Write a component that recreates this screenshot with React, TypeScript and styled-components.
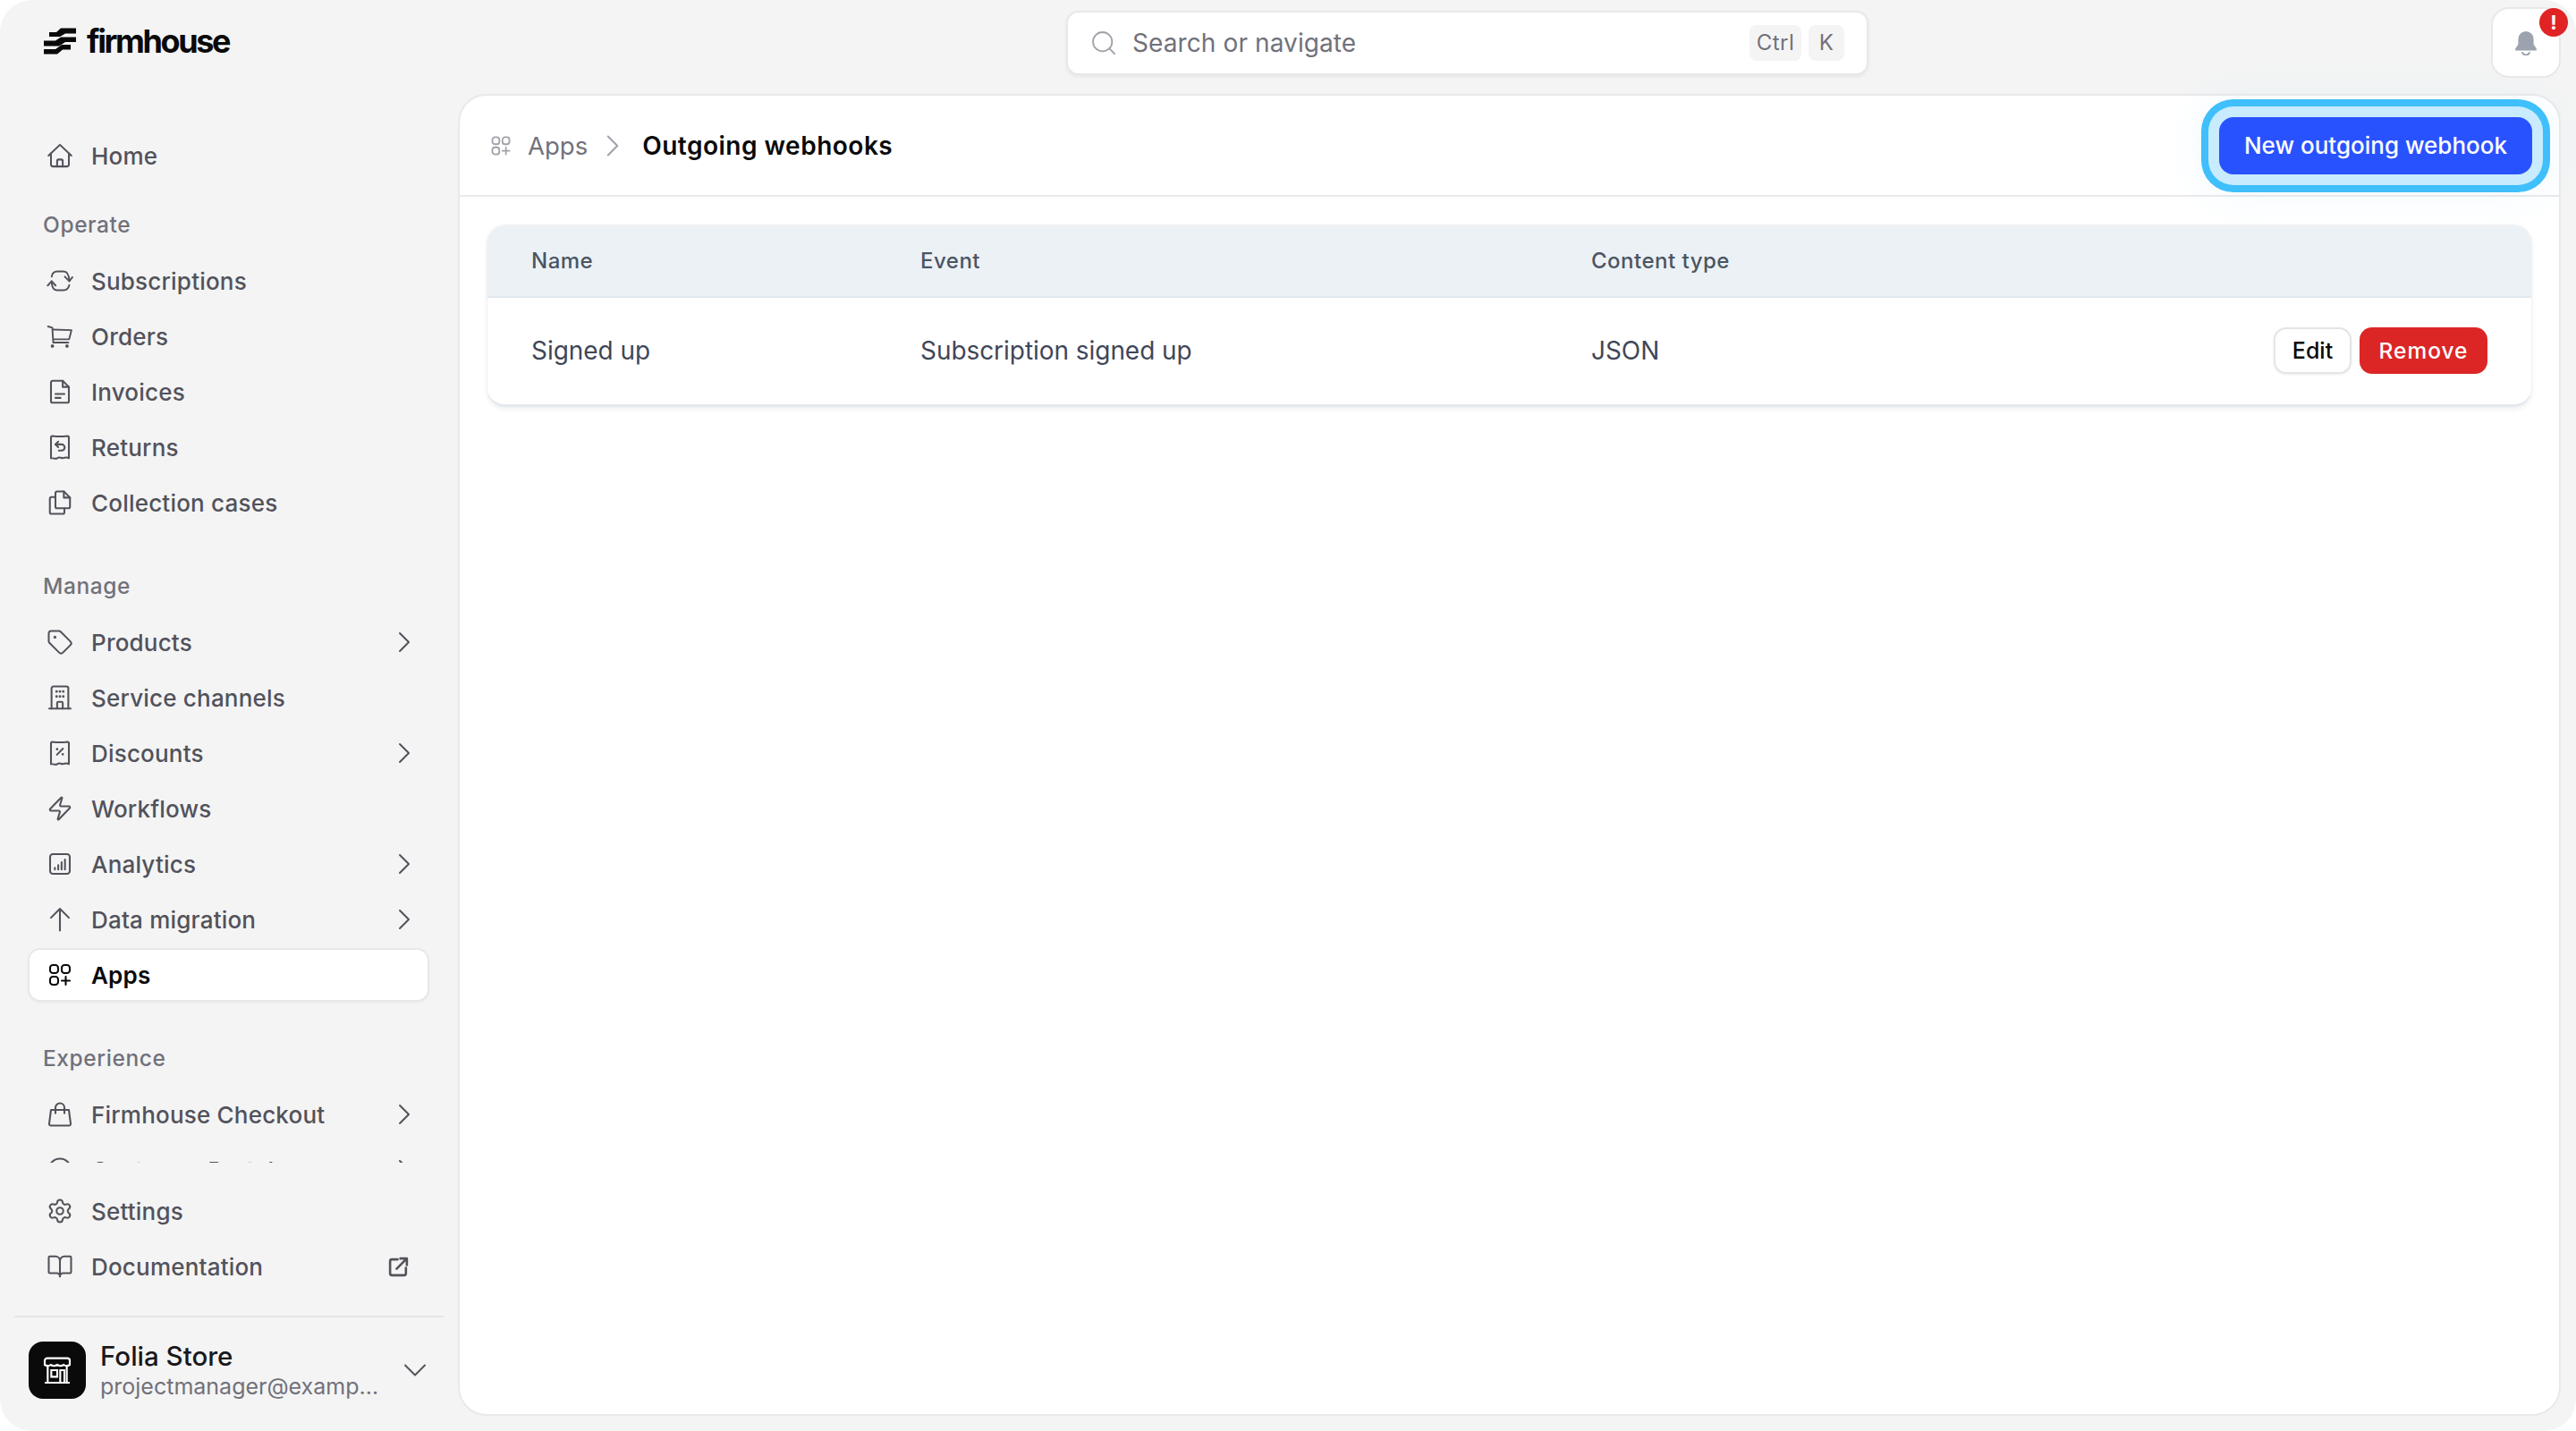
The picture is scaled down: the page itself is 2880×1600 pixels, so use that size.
import React from "react";
import styled, { createGlobalStyle } from "styled-components";
import { BookOpen, ChevronDown, ChevronRight, Search, Settings, Tag, Zap } from "lucide-react";

const GlobalStyle = createGlobalStyle`
  html, body {
    margin: 0;
    padding: 0;
    background: #fff;
  }
  * {
    box-sizing: border-box;
  }
  body {
    font-family: Inter, "Liberation Sans", sans-serif;
  }
`;

const Shell = styled.div`
  display: grid;
  grid-template-columns: 512px 1fr;
  width: 2880px;
  height: 1600px;
  background: #f4f4f4;
  border-radius: 36px;
  overflow: hidden;
`;

const Sidebar = styled.aside`
  display: flex;
  flex-direction: column;
  height: 1600px;
`;

const Brand = styled.div`
  display: flex;
  align-items: center;
  gap: 12px;
  height: 146px;
  padding: 0 0 54px 49px;
  flex-shrink: 0;
`;

const Wordmark = styled.span`
  font-size: 36px;
  font-weight: 700;
  letter-spacing: -2.4px;
  line-height: 1;
  color: #0a0a0a;
`;

const ScrollArea = styled.div`
  flex: 1;
  min-height: 0;
  overflow: hidden;
  padding: 0 34px 0 33px;
`;

const Group = styled.div<{ $top?: number }>`
  display: flex;
  flex-direction: column;
  gap: 6px;
  margin-top: ${(p) => p.$top || 0}px;
`;

const GroupTitle = styled.div`
  height: 40px;
  line-height: 43px;
  margin-bottom: 10px;
  padding-left: 15px;
  font-size: 24.5px;
  font-weight: 500;
  letter-spacing: 0.6px;
  color: #71717a;
`;

const NavItem = styled.div<{ $active?: boolean }>`
  display: flex;
  align-items: center;
  gap: 20px;
  flex-shrink: 0;
  height: 56px;
  padding: 0 20px 0 19px;
  border-radius: 12px;
  font-size: 26px;
  font-weight: ${(p) => (p.$active ? 600 : 450)};
  letter-spacing: 0.2px;
  color: ${(p) => (p.$active ? "#0a0a0a" : "#52525b")};
  background: ${(p) => (p.$active ? "#fff" : "transparent")};
  box-shadow: ${(p) =>
    p.$active ? "0 0 0 2px #e8e8e8, 0 2px 4px rgba(0,0,0,0.08)" : "none"};
  svg {
    flex-shrink: 0;
  }
`;

const NavLabel = styled.span`
  flex: 1;
  white-space: nowrap;
`;

const MoreChevron = styled(ChevronRight)`
  margin-right: -14px;
  color: #52525b;
`;

const BottomNav = styled.div`
  display: flex;
  flex-direction: column;
  gap: 6px;
  padding: 26px 34px 27px 33px;
`;

const Account = styled.div`
  display: flex;
  align-items: center;
  height: 129px;
  margin: 0 16px;
  padding: 0 10px 9px 16px;
  border-top: 2px solid #e5e5e5;
`;

const StoreBadge = styled.div`
  display: flex;
  align-items: center;
  justify-content: center;
  width: 64px;
  height: 64px;
  border-radius: 16px;
  background: #0a0a0a;
  flex-shrink: 0;
`;

const AccountText = styled.div`
  display: flex;
  flex-direction: column;
  flex: 1;
  min-width: 0;
  margin-left: 16px;
`;

const AccountName = styled.div`
  font-size: 29.5px;
  font-weight: 500;
  line-height: 36px;
  color: #18181b;
`;

const AccountMail = styled.div`
  width: 316px;
  font-size: 25px;
  line-height: 32px;
  color: #71717a;
  white-space: nowrap;
  overflow: hidden;
  text-overflow: ellipsis;
`;

const Main = styled.main`
  display: flex;
  flex-direction: column;
  min-width: 0;
  height: 1600px;
`;

const TopBar = styled.div`
  display: flex;
  align-items: center;
  height: 105px;
  padding: 0 17px 10px 0;
  flex-shrink: 0;
`;

const SearchBox = styled.div`
  display: flex;
  align-items: center;
  gap: 16px;
  width: 897px;
  height: 72px;
  margin-left: 680px;
  padding: 0 25px 0 24px;
  background: #fff;
  border: 2px solid #e8e8e8;
  border-radius: 14px;
  box-shadow: 0 2px 4px rgba(0, 0, 0, 0.06);
`;

const SearchHint = styled.span`
  flex: 1;
  font-size: 28px;
  letter-spacing: 0.1px;
  color: #71717a;
`;

const Keys = styled.div`
  display: flex;
  gap: 8px;
`;

const Kbd = styled.kbd<{ $width: number }>`
  display: flex;
  align-items: center;
  justify-content: center;
  width: ${(p) => p.$width}px;
  height: 40px;
  border-radius: 8px;
  background: #f4f4f5;
  font-family: Inter, "Liberation Sans", sans-serif;
  font-size: 24px;
  letter-spacing: 0.5px;
  color: #71717a;
`;

const BellButton = styled.div`
  position: relative;
  display: flex;
  align-items: center;
  justify-content: center;
  width: 78px;
  height: 79px;
  margin-left: auto;
  background: #fff;
  border: 2px solid #e8e8e8;
  border-radius: 20px;
`;

const BellBadge = styled.span`
  position: absolute;
  top: -1px;
  right: -10px;
  display: flex;
  align-items: center;
  justify-content: center;
  width: 32px;
  height: 32px;
  border-radius: 50%;
  background: #e02424;
  color: #fff;
  font-size: 22px;
  font-weight: 700;
`;

const Panel = styled.section`
  flex: 1;
  display: flex;
  flex-direction: column;
  min-height: 0;
  margin: 0 17px 17px 0;
  background: #fff;
  border: 2px solid #e8e9eb;
  border-radius: 32px;
`;

const PanelHeader = styled.header`
  display: flex;
  align-items: center;
  height: 113px;
  padding: 0 30px 0 33px;
  border-bottom: 2px solid #e8e9eb;
  flex-shrink: 0;
`;

const CrumbIcon = styled.span`
  display: flex;
  color: #a1a1aa;
`;

const Crumb = styled.span`
  margin-left: 17px;
  font-size: 27.5px;
  color: #71717a;
`;

const CrumbSep = styled(ChevronRight)`
  margin: 0 12px 0 7px;
  color: #a1a1aa;
`;

const CrumbCurrent = styled.h1`
  margin: 0;
  font-size: 28px;
  font-weight: 600;
  letter-spacing: 0.5px;
  color: #0a0a0a;
`;

const PrimaryButton = styled.button`
  height: 64px;
  margin-left: auto;
  padding: 0 28px;
  border: 0;
  border-radius: 16px;
  background: #2952ff;
  color: #fff;
  font-family: inherit;
  font-size: 26px;
  font-weight: 500;
  box-shadow: 0 0 0 12px #c8ebfd, 0 0 0 20px #3fbffb, 0 0 40px 26px rgba(200, 235, 253, 0.18);
`;

const Content = styled.div`
  padding: 32px 31px;
`;

const Card = styled.div`
  border-radius: 20px;
  overflow: hidden;
  background: #fff;
  border-bottom: 3px solid #e4e9f0;
  box-shadow: 0 0 0 1px #f1f2f4, 0 2px 6px rgba(0, 0, 0, 0.08);
`;

const Row = styled.div`
  display: grid;
  grid-template-columns: 435px 750px 1fr auto;
  align-items: center;
  padding: 0 49px;
`;

const HeadRow = styled(Row)`
  height: 81px;
  background: #ecf1f5;
  border-bottom: 2px solid #e2e8f0;
  font-size: 24px;
  font-weight: 500;
  letter-spacing: 0.5px;
  color: #4b5563;
`;

const BodyRow = styled(Row)`
  height: 119px;
  padding-bottom: 2px;
  font-size: 27.9px;
  color: #3f4658;
`;

const Actions = styled.div`
  display: flex;
  gap: 9px;
`;

const EditButton = styled.button`
  width: 87px;
  height: 52px;
  background: #fff;
  border: 2px solid #e5e5e5;
  border-radius: 14px;
  box-shadow: 0 1px 3px rgba(0, 0, 0, 0.08);
  color: #0a0a0a;
  font-family: inherit;
  font-size: 25px;
  font-weight: 500;
`;

const RemoveButton = styled.button`
  width: 143px;
  height: 52px;
  background: #dc2626;
  border: 0;
  border-radius: 14px;
  color: #fff;
  font-family: inherit;
  font-size: 24.5px;
  font-weight: 500;
  letter-spacing: 1px;
`;

const Ico = ({ children, size = 30, sw = 1.65 }: { children: React.ReactNode; size?: number; sw?: number }) => (
  <svg
    width={size}
    height={size}
    viewBox="0 0 24 24"
    fill="none"
    stroke="currentColor"
    strokeWidth={sw}
    strokeLinecap="round"
    strokeLinejoin="round"
  >
    {children}
  </svg>
);

const HomeIcon = () => (
  <Ico>
    <path d="M1.800 12 12 2.300 22.200 12" />
    <path d="M4 10v10a1.700 1.700 0 0 0 1.700 1.700h12.600A1.700 1.700 0 0 0 20 20V10" />
    <path d="M9.500 21.700v-5a1.200 1.200 0 0 1 1.200-1.200h2.600a1.200 1.200 0 0 1 1.200 1.200v5" />
  </Ico>
);
const SubsIcon = () => (
  <Ico>
    <g transform="translate(.8 .8) scale(.933)">
      <path d="M4.100 8C4.600 4.600 6.500 3 9.400 3h6.200c3.200 0 5.100 2.500 5.400 9.300" />
      <path d="M16.700 8 21 12.300 24 8.500" />
      <path d="M4.100 12.300C4 18 6 21 9.400 21h6.200c2.400 0 4.400-1.500 5.400-5" />
      <path d="M.3 16.500 4.100 12.300 7.900 16.500" />
    </g>
  </Ico>
);
const CartIcon = () => (
  <Ico>
    <g transform="translate(.8 .8) scale(.933)">
      <path d="M.6 2.600 4.700 3.800 5.600 18H20" />
      <path d="M5.200 5.500 23.100 6.100 20.800 14.900H5.900" />
      <circle cx="4.800" cy="21.400" r=".8" fill="currentColor" />
      <circle cx="18.800" cy="21.400" r=".8" fill="currentColor" />
    </g>
  </Ico>
);
const FileIcon = () => (
  <Ico>
    <path d="M5.500 2.200H14.500L20 7.700V20.300A1.500 1.500 0 0 1 18.500 21.800H5.500A1.500 1.500 0 0 1 4 20.300V3.700A1.500 1.500 0 0 1 5.500 2.200Z" />
    <path d="M14.500 2.200V7.700H20" />
    <path d="M8 14h8M8 17.500h4.500" />
  </Ico>
);
const ReceiptReturnIcon = () => (
  <Ico>
    <path d="M4 3.200C4 2.600 4.500 2 5.200 2c4.500.6 9.100.6 13.600 0 .7 0 1.200.6 1.200 1.200V21.800c-2.600-1.500-3.500 0-5.500 0s-3-1.500-4.800 0-2.900-.5-5.700 0Z" />
    <path d="M10.500 7 8 9.500 10.500 12" />
    <path d="M8 9.500h5.500a2.700 2.700 0 0 1 0 5.500H11" />
  </Ico>
);
const FilesIcon = () => (
  <Ico>
    <path d="M9.500 2h6l5.500 5.500V15.500A1.500 1.500 0 0 1 19.500 17H9.500A1.500 1.500 0 0 1 8 15.500V3.500A1.500 1.500 0 0 1 9.500 2Z" />
    <path d="M15.500 2v5.500H21" />
    <path d="M8 7H4.500A1.500 1.500 0 0 0 3 8.500V20.500A1.500 1.500 0 0 0 4.500 22h10a1.500 1.500 0 0 0 1.500-1.500V17" />
  </Ico>
);
const BuildingIcon = () => (
  <Ico>
    <path d="M2.400 21.800h19.200" />
    <path d="M4.500 21.800V3.700A1.700 1.700 0 0 1 6.200 2h11.600a1.700 1.700 0 0 1 1.700 1.700v18.100" />
    <path d="M9.500 21.800v-5a1 1 0 0 1 1-1h3a1 1 0 0 1 1 1v5" />
    <path d="M9 6.500h.01M15 6.500h.01M9 11h.01M15 11h.01M12 6.500h.01M12 11h.01" strokeWidth="2.300" />
  </Ico>
);
const ReceiptPercentIcon = () => (
  <Ico>
    <path d="M4 3.200C4 2.600 4.500 2 5.200 2c4.500.6 9.100.6 13.600 0 .7 0 1.200.6 1.200 1.200V21.800c-2.600-1.500-3.500 0-5.500 0s-3-1.500-4.800 0-2.900-.5-5.700 0Z" />
    <path d="M9.300 13.500 14.700 8" />
    <path d="M9.500 8.500h.01M14.500 13h.01" strokeWidth="2.200" />
  </Ico>
);
const ChartIcon = () => (
  <Ico>
    <rect x="3.200" y="3.200" width="17.600" height="17.600" rx="2.500" />
    <path d="M7.500 17v-1.500M10.500 17v-4M13.500 17v-6.500M16.500 17V8" />
  </Ico>
);
const ArrowIcon = () => (
  <Ico>
    <path d="M12 22V2.500M4 10.500 12 2.500l8 8" />
  </Ico>
);
const AppsIcon = ({ size = 30 }: { size?: number }) => (
  <Ico size={size}>
    <rect x="3.200" y="3.200" width="7.200" height="7.200" rx="2.500" />
    <rect x="13.600" y="3.200" width="7.200" height="7.200" rx="2.500" />
    <rect x="3.200" y="13.600" width="7.200" height="7.200" rx="2.500" />
    <path d="M17.200 13.600v7.200M13.600 17.200h7.200" />
  </Ico>
);
const BagIcon = () => (
  <Ico>
    <path d="M4 8h16l1.600 12.300a1.500 1.500 0 0 1-1.500 1.700H3.900a1.500 1.500 0 0 1-1.500-1.700Z" />
    <path d="M8 11V6a4 4 0 0 1 8 0v5" />
  </Ico>
);
const PortalIcon = () => (
  <Ico>
    <circle cx="12" cy="12" r="10" />
  </Ico>
);
const ExternalIcon = () => (
  <Ico size={25} sw={2.500}>
    <path d="M11 4H5a2 2 0 0 0-2 2v13a2 2 0 0 0 2 2h13a2 2 0 0 0 2-2v-6" />
    <path d="M10 14 21 3M14 3h7v7" />
  </Ico>
);
const LogoMark = () => (
  <svg width="36" height="30" viewBox="0 0 36 29" fill="#0a0a0a">
    <path d="M6 4.500h8L19 0h17v6H24l-6 3.500H6Z" />
    <path d="M0 14h13l6-4h17v5.500H24L17 20H0Z" />
    <path d="M0 23.500h13l7-5h10V24h-9l-6 5H0Z" />
  </svg>
);
const StoreIcon = () => (
  <svg width="32" height="32" viewBox="0 0 24 24" fill="none" stroke="#fff" strokeWidth="1.600">
    <path d="M3.500 2h17a2 2 0 0 1 2 2v3.500c-1.800 1.200-3.500 1.200-5 0-1.800 1.200-3.600 1.200-5.500 0-1.900 1.200-3.700 1.200-5.500 0-1.500 1.200-3.200 1.200-5 0V4a2 2 0 0 1 2-2Z" />
    <path d="M4 9v13M20 9v13M1.500 22.500h21" />
    <path d="M7 12h5v5.500H7zM14.500 22.500V12H18v10.500" />
  </svg>
);
const BellIcon = () => (
  <svg width="26" height="28" viewBox="0 0 24 26" fill="#9ca3af">
    <path d="M12 1a8 8 0 0 0-8 8v5.500L1 19v2h22v-2l-3-4.500V9a8 8 0 0 0-8-8Z" />
    <path d="M8 22.500a4.200 4.200 0 0 0 8 0" fill="none" stroke="#9ca3af" strokeWidth="1.800" />
  </svg>
);

type Item = { label: string; icon: React.ReactNode; more?: boolean; active?: boolean };

const operate: Item[] = [
  { label: "Subscriptions", icon: <SubsIcon /> },
  { label: "Orders", icon: <CartIcon /> },
  { label: "Invoices", icon: <FileIcon /> },
  { label: "Returns", icon: <ReceiptReturnIcon /> },
  { label: "Collection cases", icon: <FilesIcon /> },
];

const manage: Item[] = [
  { label: "Products", icon: <Tag size={30} strokeWidth={1.65} />, more: true },
  { label: "Service channels", icon: <BuildingIcon /> },
  { label: "Discounts", icon: <ReceiptPercentIcon />, more: true },
  { label: "Workflows", icon: <Zap size={30} strokeWidth={1.65} /> },
  { label: "Analytics", icon: <ChartIcon />, more: true },
  { label: "Data migration", icon: <ArrowIcon />, more: true },
  { label: "Apps", icon: <AppsIcon />, active: true },
];

const experience: Item[] = [
  { label: "Firmhouse Checkout", icon: <BagIcon />, more: true },
  { label: "Customer Portal", icon: <PortalIcon />, more: true },
];

const renderItems = (items: Item[]) =>
  items.map((item) => (
    <NavItem key={item.label} $active={item.active}>
      {item.icon}
      <NavLabel>{item.label}</NavLabel>
      {item.more && <MoreChevron size={40} strokeWidth={1.2} />}
    </NavItem>
  ));

export default function App() {
  return (
    <>
      <GlobalStyle />
      <Shell>
        <Sidebar>
          <Brand>
            <LogoMark />
            <Wordmark>firmhouse</Wordmark>
          </Brand>
          <ScrollArea>
            <Group>{renderItems([{ label: "Home", icon: <HomeIcon /> }])}</Group>
            <Group $top={28}>
              <GroupTitle>Operate</GroupTitle>
              {renderItems(operate)}
            </Group>
            <Group $top={44}>
              <GroupTitle>Manage</GroupTitle>
              {renderItems(manage)}
            </Group>
            <Group $top={44}>
              <GroupTitle>Experience</GroupTitle>
              {renderItems(experience)}
            </Group>
          </ScrollArea>
          <BottomNav>
            <NavItem>
              <Settings size={30} strokeWidth={1.65} />
              <NavLabel>Settings</NavLabel>
            </NavItem>
            <NavItem>
              <BookOpen size={30} strokeWidth={1.65} />
              <NavLabel>Documentation</NavLabel>
              <ExternalIcon />
            </NavItem>
          </BottomNav>
          <Account>
            <StoreBadge>
              <StoreIcon />
            </StoreBadge>
            <AccountText>
              <AccountName>Folia Store</AccountName>
              <AccountMail>projectmanager@example.com</AccountMail>
            </AccountText>
            <ChevronDown size={44} strokeWidth={1.1} color="#52525b" />
          </Account>
        </Sidebar>
        <Main>
          <TopBar>
            <SearchBox>
              <Search size={32} strokeWidth={1.35} color="#a1a1aa" />
              <SearchHint>Search or navigate</SearchHint>
              <Keys>
                <Kbd $width={58}>Ctrl</Kbd>
                <Kbd $width={40}>K</Kbd>
              </Keys>
            </SearchBox>
            <BellButton>
              <BellIcon />
              <BellBadge>!</BellBadge>
            </BellButton>
          </TopBar>
          <Panel>
            <PanelHeader>
              <CrumbIcon>
                <AppsIcon size={26} />
              </CrumbIcon>
              <Crumb>Apps</Crumb>
              <CrumbSep size={42} strokeWidth={1.15} />
              <CrumbCurrent>Outgoing webhooks</CrumbCurrent>
              <PrimaryButton>New outgoing webhook</PrimaryButton>
            </PanelHeader>
            <Content>
              <Card>
                <HeadRow>
                  <span>Name</span>
                  <span>Event</span>
                  <span>Content type</span>
                </HeadRow>
                <BodyRow>
                  <span>Signed up</span>
                  <span>Subscription signed up</span>
                  <span>JSON</span>
                  <Actions>
                    <EditButton>Edit</EditButton>
                    <RemoveButton>Remove</RemoveButton>
                  </Actions>
                </BodyRow>
              </Card>
            </Content>
          </Panel>
        </Main>
      </Shell>
    </>
  );
}
